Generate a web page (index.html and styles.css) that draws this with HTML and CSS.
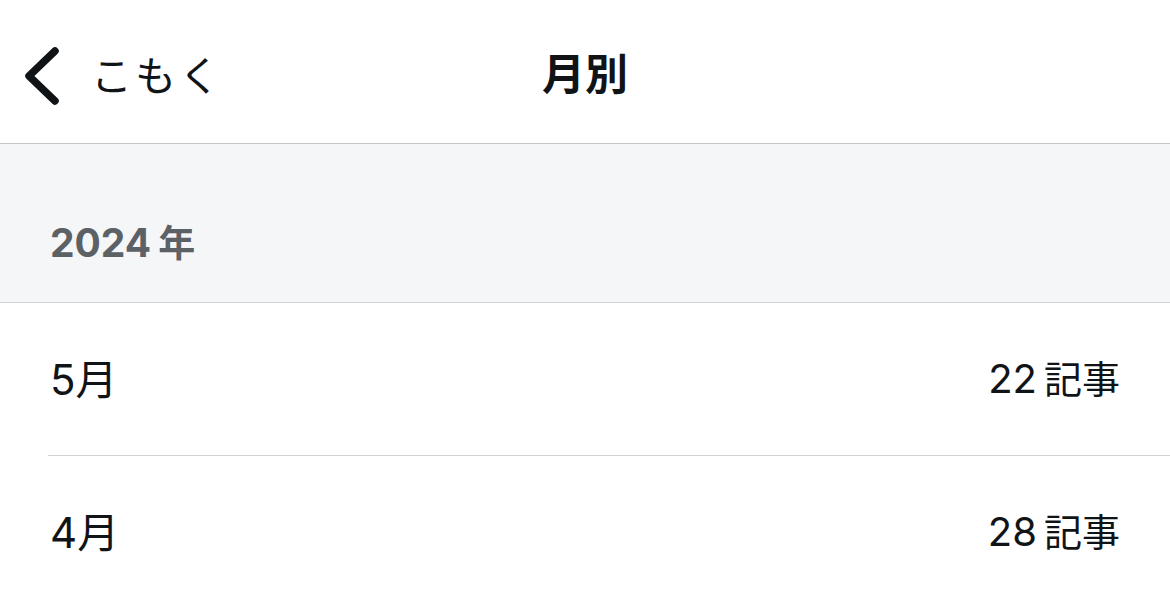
FILE: index.html
```html
<!DOCTYPE html>
<html lang="ja">
<head>
    <meta charset="UTF-8">
    <meta name="viewport" content="width=device-width, initial-scale=1.0">
    <title>月別</title>
    <link rel="stylesheet" href="styles.css">
</head>
<body>
    <header class="nav-bar">
        <a href="#" class="back-link">
            <svg class="back-icon" width="40" height="60" viewBox="0 0 40 60">
                <path d="M32 5 L6 30 L32 55" fill="none" stroke="#111417" stroke-width="7.5" stroke-linecap="round" stroke-linejoin="round"/>
            </svg>
            <span class="back-label">こもく</span>
        </a>
        <h1 class="nav-title">月別</h1>
    </header>

    <section class="year-header">
        <div class="year-label">2024<span class="unit">年</span></div>
    </section>

    <ul class="month-list">
        <li class="month-item">
            <span class="month-name">5月</span>
            <span class="month-count">22<span class="unit">記事</span></span>
        </li>
        <li class="month-item">
            <span class="month-name">4月</span>
            <span class="month-count">28<span class="unit">記事</span></span>
        </li>
    </ul>
</body>
</html>
```

FILE: styles.css
```css
* {
    margin: 0;
    padding: 0;
    box-sizing: border-box;
    font-family: 'Inter', 'Noto Sans CJK JP', sans-serif;
}

body {
    background: #fff;
    color: #111417;
    overflow: hidden;
}

/* Navigation bar */
.nav-bar {
    position: relative;
    height: 144px;
    display: flex;
    align-items: center;
    justify-content: center;
    border-bottom: 1px solid #c6c6c8;
}

.back-link {
    position: absolute;
    left: 23px;
    top: 46px;
    display: flex;
    align-items: center;
    text-decoration: none;
    color: #111417;
}

.back-icon {
    display: block;
}

.back-label {
    margin-left: 28px;
    font-size: 41px;
    letter-spacing: 3px;
    font-weight: 400;
    line-height: 60px;
}

.nav-title {
    font-size: 43px;
    font-weight: 700;
    margin-top: -2px;
}

/* Year section */
.year-header {
    height: 159px;
    background: #f5f6f8;
    border-bottom: 1px solid #d1d1d6;
    padding: 0 50px 40px;
    display: flex;
    align-items: flex-end;
}

.year-label {
    font-size: 39px;
    font-weight: 700;
    color: #5c6166;
    line-height: 1;
}

.year-label .unit {
    margin-left: 7px;
    font-size: 37px;
}

/* Month rows */
.month-list {
    list-style: none;
    padding-left: 48px;
}

.month-item {
    height: 153px;
    display: flex;
    align-items: center;
    justify-content: space-between;
    padding-right: 50px;
    padding-bottom: 6px;
    border-bottom: 1px solid #d1d1d6;
}

.month-name {
    padding-left: 2px;
    font-size: 42px;
}

.month-count {
    font-size: 40px;
}

.month-count .unit {
    margin-left: 7px;
    font-size: 38px;
}
```
